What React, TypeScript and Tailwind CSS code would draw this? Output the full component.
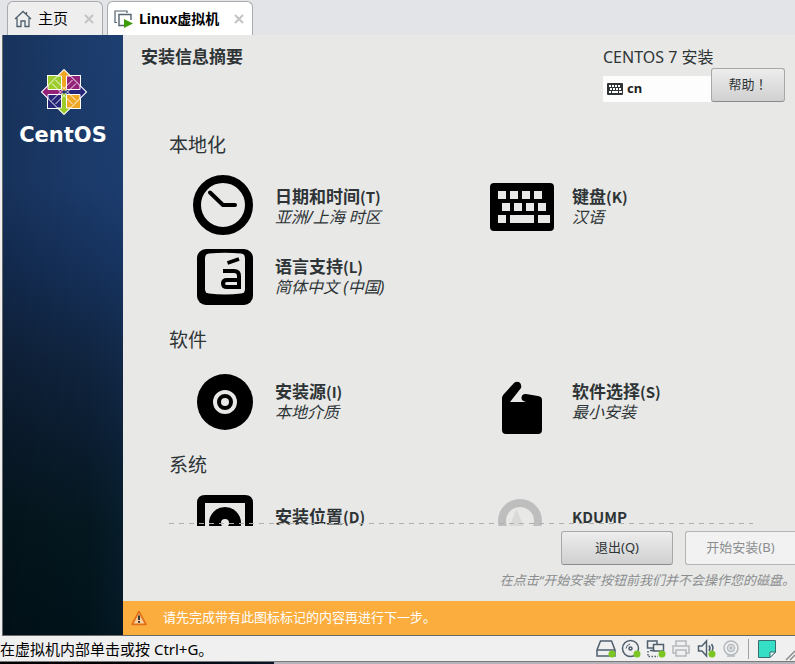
import type { ReactNode } from "react";

const CentosMark = () => (
  <svg width="48" height="48" viewBox="-25 -24 48 48" aria-hidden="true">
    <g stroke="#fff" strokeWidth="1">
      <rect x="-16.5" y="-16.5" width="15.5" height="15.5" fill="#9ccd2a" />
      <rect x="1" y="-16.5" width="15.5" height="15.5" fill="#932279" />
      <rect x="1" y="1" width="15.5" height="15.5" fill="#efa724" />
      <rect x="-16.5" y="1" width="15.5" height="15.5" fill="#262577" />
    </g>
    <g stroke="#fff" strokeWidth="1">
      <path d="M0 -22.5 6.500 -16H2.500V-3L0 0-2.500 -3V-16H-6.500Z" fill="#efa724" />
      <path d="M22.5 0 16 6.500V2.500H3L0 0 3 -2.500H16V-6.500Z" fill="#262577" />
      <path d="M0 22.5 -6.500 16H-2.500V3L0 0 2.500 3V16H6.500Z" fill="#9ccd2a" />
      <path d="M-22.5 0 -16 -6.500V-2.500H-3L0 0-3 2.500H-16V6.500Z" fill="#932279" />
    </g>
    <g fill="none" stroke="#fff" strokeWidth="1">
      <path d="M0 -22.5 22.5 0 0 22.5 -22.5 0Z" />
      <path d="M-12 -8.500 -3 .5M-8.500 -12 .5 -3M12 -8.500 3 .5M8.500 -12-.5 -3M-12 8.500-3 -.5M-8.500 12 .5 3M12 8.500 3 -.5M8.500 12-.5 3" strokeWidth=".9" />
    </g>
    <rect x="-1.5" y="-1.5" width="3" height="3" fill="#1b3763" />
  </svg>
);

const ClockIcon = () => (
  <svg width="64" height="64" viewBox="0 0 64 64" aria-hidden="true">
    <circle cx="30" cy="30" r="26" fill="none" stroke="#000" strokeWidth="8" />
    <path d="M17 17.5 30 30H42" fill="none" stroke="#000" strokeWidth="4" strokeLinecap="round" strokeLinejoin="round" />
  </svg>
);

const LanguageIcon = () => (
  <svg width="64" height="64" viewBox="0 0 64 64" aria-hidden="true">
    <rect x="4" y="4" width="56" height="56" rx="9" />
    <path d="M16 8.5Q32 7 48 8.5 52 9 52 13V44Q52 48 48 48.5 32 50.500 16 48.500 12 48 12 44V13Q12 9 16 8.500Z" fill="#e8e8e7" />
    <path d="M34.500 18 46 14" stroke="#000" strokeWidth="3.500" />
    <path d="M30 26H41Q46 26 46 31V42H34Q30 42 30 38.500T34 35H46" fill="none" stroke="#000" strokeWidth="4" />
  </svg>
);

const KeyboardIcon = () => (
  <svg width="64" height="64" viewBox="0 0 64 64" aria-hidden="true">
    <rect y="8" width="64" height="48" rx="4" />
    <g fill="#e8e8e7">
      <path d="M8 16h8v8H8zM20 16h8v8H20zM32 16h8v8H32zM44 16h8v8H44z" />
      <path d="M12 28h8v8H12zM24 28h8v8H24zM36 28h8v8H36zM48 28h8v8H48z" />
      <path d="M8 40h8v8H8zM20 40h24v8H20zM48 40h12v8H48z" />
    </g>
  </svg>
);

const DiscIcon = () => (
  <svg width="64" height="64" viewBox="0 0 64 64" aria-hidden="true">
    <circle cx="32" cy="32" r="28" />
    <circle cx="32" cy="32" r="10" fill="none" stroke="#e8e8e7" strokeWidth="4" />
    <circle cx="32" cy="32" r="4" fill="#e8e8e7" />
  </svg>
);

const PackageIcon = () => (
  <svg width="64" height="64" viewBox="0 0 64 64" aria-hidden="true">
    <path d="M12 32V28Q12 26 13.500 24.500L24 13Q26 11 29 12 32 14 31 18L20 32H36Q31 31 31.500 27.500 32 23.500 36 24L48 26Q52 26.500 52 30V60Q52 64 48 64H16Q12 64 12 60Z" />
  </svg>
);

const HardDriveIcon = () => (
  <svg width="64" height="64" viewBox="0 0 64 64" aria-hidden="true">
    <path fillRule="evenodd" d="M12 0H52Q60 0 60 8V64H4V8Q4 0 12 0ZM12 8V56H52V8Z" />
    <circle cx="32" cy="28" r="16" />
    <circle cx="32" cy="28" r="4" fill="#e8e8e7" />
  </svg>
);

const KdumpIcon = () => (
  <svg width="64" height="64" viewBox="0 0 64 64" aria-hidden="true">
    <path d="M20 34 26.500 18 33 34Z" fill="#d9d9d8" stroke="#d9d9d8" strokeWidth="3" />
    <circle cx="30" cy="26" r="18" fill="none" stroke="#bebebe" strokeWidth="8" />
  </svg>
);

const MiniKeyboard = () => (
  <svg width="16" height="12" viewBox="0 0 16 12" aria-hidden="true">
    <rect width="16" height="12" rx="1" fill="#2e3436" />
    <path d="M2 2h2v2H2zM5 2h2v2H5zM8 2h2v2H8zM11 2h2v2h-2zM3 5h2v2H3zM6 5h2v2H6zM9 5h2v2H9zM12 5h2v2h-2zM2 8h2v2H2zM5 8h6v2H5zM12 8h3v2h-3z" fill="#fff" />
  </svg>
);

const WarningIcon = () => (
  <svg width="16" height="16" viewBox="0 0 16 16" aria-hidden="true">
    <path d="M8 1.500 15 14.500H1Z" fill="#f0a050" stroke="#e0701a" strokeWidth="1.600" strokeLinejoin="round" />
    <path d="M8 4 13 13.300H3Z" fill="#f8cfa0" />
    <path d="M7 5.500h2v4.500H7zM7 11h2v1.800H7z" fill="#333" />
  </svg>
);

const HomeIcon = () => (
  <svg width="18" height="18" viewBox="0 0 18 18" fill="none" stroke="#4f5f6d" strokeWidth="1.300" aria-hidden="true">
    <path d="M1 9 9 1.500 17 9M3 8V16.500H7V11H11V16.500H15V8M12.500 4V2" />
  </svg>
);

const MachineIcon = () => (
  <svg width="19" height="18" viewBox="0 0 19 18" aria-hidden="true">
    <path d="M3 12.500H1V1H13V3" fill="none" stroke="#55636f" strokeWidth="1.200" />
    <path d="M10 15.500H5V4.500H17V10" fill="none" stroke="#55636f" strokeWidth="1.400" />
    <path d="M10 9 19 13.500 10 18Z" fill="#3f9c0a" />
  </svg>
);

const Dot = () => <circle cx="16" cy="15" r="3.500" fill="#7cc623" stroke="none" />;

const DEVICES: { name: string; off?: boolean; art: ReactNode }[] = [
  {
    name: "硬盘",
    art: (
      <>
        <path d="M4.500 2H15.500L19 11V17H1V11ZM1 11H19" />
        <Dot />
      </>
    ),
  },
  {
    name: "光驱",
    art: (
      <>
        <circle cx="9.500" cy="9.500" r="8" />
        <circle cx="9.500" cy="9.500" r="1.500" />
        <path d="M5 9.500Q5.500 6 9 5" strokeWidth="1" />
        <Dot />
      </>
    ),
  },
  {
    name: "网络",
    art: (
      <>
        <path d="M7 9H1.500V2H11V5M4 11.500H9M7.500 5.500H17.500V12H7.500Z" />
        <path d="M2 12V17.500H12" strokeDasharray="1.500 1.500" />
        <Dot />
      </>
    ),
  },
  {
    name: "打印机",
    off: true,
    art: <path d="M5 7V2H15V7M5 14H2V7H18V14H15M5 11H15V17H5Z" />,
  },
  {
    name: "声音",
    art: (
      <>
        <path d="M2.500 7H6L10.500 2V17L6 12H2.500ZM13 6.500Q15 9.500 13 12M15.500 5Q18 9 16 12" />
        <Dot />
      </>
    ),
  },
  {
    name: "摄像头",
    off: true,
    art: (
      <>
        <circle cx="10" cy="9" r="7" />
        <circle cx="10" cy="9" r="3.500" />
        <circle cx="10" cy="9" r="1" />
        <path d="M6 17H14" />
      </>
    ),
  },
];

const SECTIONS = [
  {
    title: "本地化",
    items: [
      { name: "日期和时间", latin: "(T)", status: "亚洲/上海 时区", icon: <ClockIcon /> },
      { name: "键盘", latin: "(K)", status: "汉语", icon: <KeyboardIcon /> },
      { name: "语言支持", latin: "(L)", status: "简体中文 (中国)", icon: <LanguageIcon /> },
    ],
  },
  {
    title: "软件",
    items: [
      { name: "安装源", latin: "(I)", status: "本地介质", icon: <DiscIcon /> },
      { name: "软件选择", latin: "(S)", status: "最小安装", icon: <PackageIcon /> },
    ],
  },
  {
    title: "系统",
    items: [
      { name: "安装位置", latin: "(D)", status: "", icon: <HardDriveIcon /> },
      { name: "", latin: "KDUMP", status: "", icon: <KdumpIcon /> },
    ],
  },
];

function Tab({ icon, label, active }: { icon: ReactNode; label: string; active?: boolean }) {
  return (
    <div
      className={`flex items-center rounded-t-md border border-b-0 border-[#a9abad] pl-1.5 ${
        active ? "w-[146px] bg-white" : "w-24 bg-[#eeeeef]"
      }`}
    >
      <button
        type="button"
        className={`flex flex-1 items-center gap-1.5 whitespace-nowrap text-black ${active ? "text-[14px] font-bold" : "text-[15px]"}`}
      >
        {icon}
        {label}
      </button>
      <button type="button" aria-label={`关闭 ${label}`} className="px-2">
        <svg width="10" height="10" viewBox="0 0 10 10" stroke="#c3c3c3" strokeWidth="2" aria-hidden="true">
          <path d="M1 1 9 9M9 1 1 9" />
        </svg>
      </button>
    </div>
  );
}

function Spoke({ name, latin, status, icon }: { name: string; latin: string; status: string; icon: ReactNode }) {
  return (
    <button type="button" className="flex h-16 items-center gap-[18px] text-left whitespace-nowrap">
      <span className="shrink-0">{icon}</span>
      <span className="flex flex-col text-[#2e3436]">
        <span className="h-5 font-['Noto_Sans_CJK_SC',sans-serif] text-[17px] leading-5 font-bold">
          {name}
          <span className="text-[15px]">{latin}</span>
        </span>
        <span className="h-[22px] text-[16px] leading-[22px] italic">{status}</span>
      </span>
    </button>
  );
}

export default function App() {
  return (
    <div className="flex h-screen flex-col overflow-hidden bg-[#f0f0f0] font-['Noto_Sans','Noto_Sans_CJK_SC',sans-serif]">
      <nav className="flex h-[35px] shrink-0 gap-1 bg-[#e3e4e7] pt-px pl-[7px]">
        <Tab icon={<HomeIcon />} label="主页" />
        <Tab icon={<MachineIcon />} label="Linux虚拟机" active />
      </nav>

      <div className="ml-0.5 flex min-h-0 flex-1 border-b border-l border-[#6a6a6a]">
        <aside className="flex w-[120px] shrink-0 flex-col items-center bg-[linear-gradient(90deg,#00000026,#0000_70%,#2a5cae14),linear-gradient(180deg,#1c3c6c_0%,#1b3a6a_25%,#15305a_38%,#10243f_54%,#0a1c2e_68%,#04171f_82%,#01131a_100%)] pt-[33px]">
          <CentosMark />
          <span className="mt-[5px] font-['DejaVu_Sans',sans-serif] text-[21px] leading-7 font-bold text-white">CentOS</span>
        </aside>

        <div className="flex min-w-0 flex-1 flex-col bg-[#e8e8e7]">
          <header className="flex shrink-0 justify-between pt-3 pr-2.5 pl-[18px] text-[#2e3436]">
            <h1 className="text-[17px] leading-5 font-bold">安装信息摘要</h1>
            <div className="flex items-end">
              <div className="flex w-[108px] flex-col gap-[9px] whitespace-nowrap">
                <span className="text-[16px] leading-5">CENTOS 7 安装</span>
                <button type="button" className="flex h-[26px] items-center gap-1 bg-[#fdfdfd] pl-1 text-[13px] font-bold text-[#1c2022]">
                  <MiniKeyboard />
                  cn
                </button>
              </div>
              <button
                type="button"
                className="h-[34px] w-[74px] rounded-[3px] border border-[#a8a8a8] border-b-[#8b8b8b] bg-linear-to-b from-[#ededed] to-[#d0d0d0] font-['Noto_Sans','Noto_Sans_CJK_TC',sans-serif] text-[13px]"
              >
                帮助！
              </button>
            </div>
          </header>

          <main className="relative mt-[18px] flex min-h-0 flex-1 flex-col">
            <div className="flex flex-1 flex-col gap-[18px] overflow-y-auto pt-3 pl-[46px] [scrollbar-width:none]">
              {SECTIONS.map((s) => (
                <section key={s.title} className="flex shrink-0 flex-col gap-4">
                  <h2 className="text-[19px] leading-[27px] text-[#2e3436]">{s.title}</h2>
                  <div className="grid grid-cols-[297px_1fr] gap-y-1.5 pl-6">
                    {s.items.map((item) => (
                      <Spoke key={item.latin} {...item} />
                    ))}
                  </div>
                </section>
              ))}
            </div>
            <div className="pointer-events-none absolute right-[42px] bottom-0.5 left-[46px] h-px bg-[repeating-linear-gradient(90deg,#b0b0b0_0_5px,transparent_5px_10px)]" />
          </main>

          <footer className="flex shrink-0 flex-col items-end pt-[5px]">
            <div className="flex gap-3 text-[13px]">
              <button
                type="button"
                className="h-[34px] w-28 rounded-[3px] border border-[#a8a8a8] border-b-[#8b8b8b] bg-linear-to-b from-[#ededed] to-[#d0d0d0] text-[#2e3436]"
              >
                退出(Q)
              </button>
              <button type="button" disabled className="h-[34px] w-[110px] rounded-l-[3px] border border-r-0 border-[#b4b4b4] bg-[#f2f2f2] text-[#8b8e8f]">
                开始安装(B)
              </button>
            </div>
            <p className="mt-[5px] mb-[11px] text-[13px] leading-5 whitespace-nowrap text-[#8b8e8f] italic">
              在点击“开始安装”按钮前我们并不会操作您的磁盘。
            </p>
          </footer>

          <div role="status" className="flex h-[34px] shrink-0 items-center gap-4 bg-[#fbad3e] pl-2 text-[13px] text-white">
            <WarningIcon />
            请先完成带有此图标标记的内容再进行下一步。
          </div>
        </div>
      </div>

      <div className="flex h-[25px] shrink-0 items-center justify-between overflow-hidden whitespace-nowrap">
        <p className="text-[15px] leading-6 text-black">在虚拟机内部单击或按 Ctrl+G。</p>
        <div className="flex h-full items-center gap-[5px]">
          {DEVICES.map((d) => (
            <button key={d.name} type="button" aria-label={d.name}>
              <svg width="20" height="20" viewBox="0 0 20 20" fill="none" stroke={d.off ? "#b3b8bc" : "#4f5f6d"} strokeWidth="1.500">
                {d.art}
              </svg>
            </button>
          ))}
          <span className="mr-1 ml-0.5 h-5 w-px bg-[#a0a0a0]" />
          <button type="button" aria-label="消息日志">
            <svg width="18" height="18" viewBox="0 0 18 18" fill="#35dfc6" stroke="#3d6a70">
              <path d="M.5.5H17.500V12L12 17.500H.5Z" />
              <path d="M17.500 12H12V17.500Z" fill="#e6fffb" />
            </svg>
          </button>
          <svg width="14" height="24" viewBox="0 0 14 24" stroke="#8d8d8d" strokeWidth="1.500" aria-hidden="true">
            <path d="M5 23 14 14M9 23 14 18" />
          </svg>
        </div>
      </div>
      <div className="flex h-[3px] shrink-0 border-t border-[#7a7a7a] bg-[#b5b2b9]">
        <div className="w-[274px] bg-linear-to-r from-black to-[#0a1526]" />
      </div>
    </div>
  );
}
